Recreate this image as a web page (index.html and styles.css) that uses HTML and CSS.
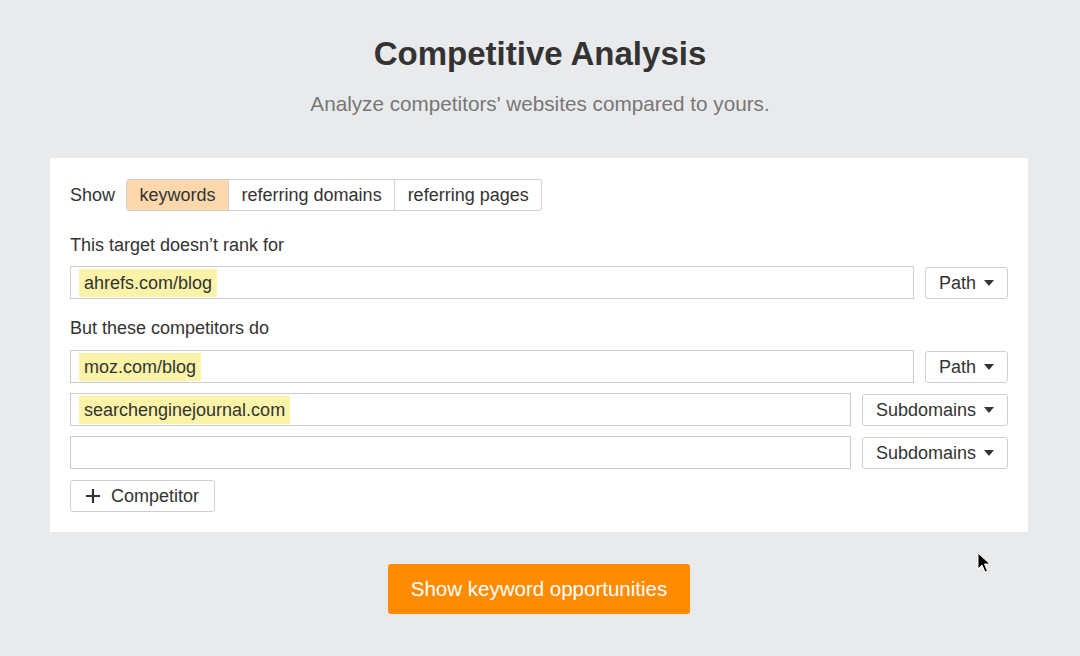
FILE: index.html
```html
<!DOCTYPE html>
<html lang="en">
<head>
    <meta charset="UTF-8">
    <meta name="viewport" content="width=device-width, initial-scale=1.0">
    <title>Competitive Analysis</title>
    <link rel="stylesheet" href="styles.css">
</head>
<body>

    <h1>Competitive Analysis</h1>
    <p class="subtitle">Analyze competitors' websites compared to yours.</p>

    <div class="card">
        <div class="show-row">
            <span class="show-label">Show</span>
            <div class="toggle">
                <span class="toggle-item active">keywords</span>
                <span class="toggle-item">referring domains</span>
                <span class="toggle-item">referring pages</span>
            </div>
        </div>

        <p class="label">This target doesn’t rank for</p>
        <div class="row">
            <div class="field"><span class="mark">ahrefs.com/blog</span></div>
            <div class="select">Path <span class="caret"></span></div>
        </div>

        <p class="label label-second">But these competitors do</p>
        <div class="row">
            <div class="field"><span class="mark">moz.com/blog</span></div>
            <div class="select">Path <span class="caret"></span></div>
        </div>
        <div class="row">
            <div class="field"><span class="mark">searchenginejournal.com</span></div>
            <div class="select">Subdomains <span class="caret"></span></div>
        </div>
        <div class="row">
            <div class="field"></div>
            <div class="select">Subdomains <span class="caret"></span></div>
        </div>

        <div class="add-btn">
            <svg width="16" height="16" viewBox="0 0 16 16"><path d="M8 1v14M1 8h14" stroke="#333" stroke-width="2.2"/></svg>
            Competitor
        </div>
    </div>

    <div class="submit">Show keyword opportunities</div>

    <svg class="cursor" width="14" height="22" viewBox="0 0 14 22">
        <path d="M1 1v16l4-4 3 7 2.5-1-3-7h5.5z" fill="#000" stroke="#fff" stroke-width="1"/>
    </svg>

</body>
</html>
```

FILE: styles.css
```css
body {
    font-family: 'Liberation Sans', Arial, sans-serif;
    color: #333;
    background-color: #e9eaec;
    margin: 0;
    padding: 34px 0 0;
}
h1 {
    text-align: center;
    font-size: 33px;
    line-height: 40px;
    margin: 0;
    color: #333;
}
.subtitle {
    text-align: center;
    font-size: 20.7px;
    line-height: 24px;
    color: #777;
    margin: 18px 0 0;
}
.card {
    background: #fff;
    width: 938px;
    margin: 42px auto 0;
    padding: 21px 20px 20px;
    position: relative;
    left: -1px;
}
.show-row {
    display: flex;
    align-items: center;
    font-size: 18px;
}
.show-label {
    margin-right: 11px;
}
.toggle {
    display: flex;
    border: 1px solid #cfcfcf;
    border-radius: 3px;
    overflow: hidden;
}
.toggle-item {
    height: 30px;
    line-height: 31px;
    padding: 0 12.5px;
    border-left: 1px solid #cfcfcf;
}
.toggle-item:first-child {
    border-left: none;
}
.toggle-item.active {
    background-color: #fdd8ad;
}
.label {
    font-size: 18px;
    line-height: 22px;
    margin: 23px 0 10px;
}
.label-second {
    margin-top: 18px;
    margin-bottom: 11px;
}
.row {
    display: flex;
    align-items: flex-start;
    gap: 11px;
    margin-bottom: 10px;
}
.field {
    flex: 1;
    height: 29px;
    border: 1px solid #cccccc;
    padding: 2px 8px 0;
    box-sizing: content-box;
    font-size: 18px;
    display: flex;
    align-items: flex-start;
}
.mark {
    background-color: #fbf4a8;
    padding: 0 5px;
    height: 28px;
    line-height: 29px;
}
.select {
    border: 1px solid #cfcfcf;
    border-radius: 3px;
    height: 30px;
    line-height: 31px;
    margin-top: 1px;
    padding: 0 13px;
    font-size: 18px;
    display: flex;
    align-items: center;
    gap: 8px;
    white-space: nowrap;
}
.caret {
    width: 0;
    height: 0;
    border-left: 5px solid transparent;
    border-right: 5px solid transparent;
    border-top: 6px solid #333;
}
.add-btn {
    display: inline-flex;
    align-items: center;
    gap: 10px;
    border: 1px solid #cfcfcf;
    border-radius: 3px;
    height: 30px;
    padding: 0 15px 0 14px;
    font-size: 18px;
    margin-top: 1px;
}
.submit {
    width: 302px;
    height: 50px;
    line-height: 50px;
    margin: 32px auto 0;
    background-color: #ff8c00;
    color: #fff;
    text-align: center;
    font-size: 20.5px;
    border-radius: 3px;
    position: relative;
    left: -1px;
}
.cursor {
    position: absolute;
    left: 977px;
    top: 552px;
}
```
